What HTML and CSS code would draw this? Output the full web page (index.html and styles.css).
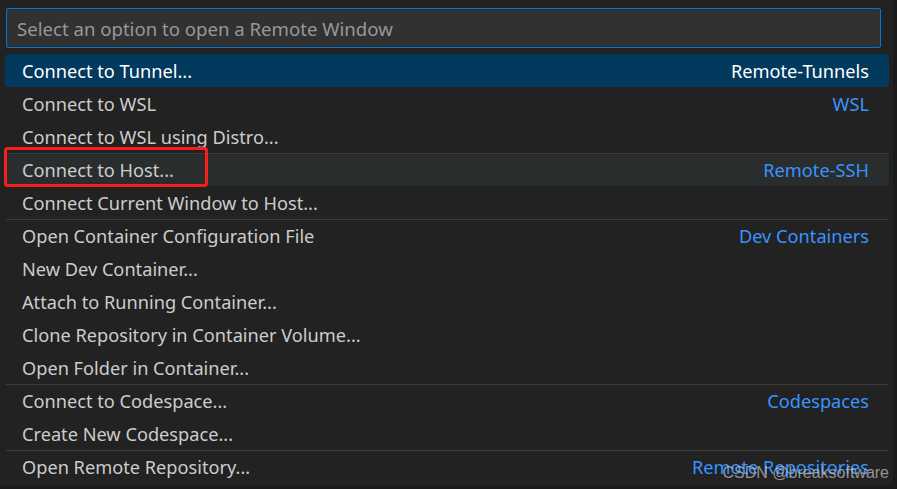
FILE: index.html
```html
<!DOCTYPE html>
<html lang="en">
<head>
    <meta charset="UTF-8">
    <title>Remote Window</title>
    <link rel="stylesheet" href="styles.css">
</head>
<body>
    <div class="quick-pick">
        <div class="input-row">
            <input type="text" class="search" placeholder="Select an option to open a Remote Window">
        </div>
        <div class="list">
            <div class="item selected"><span class="label">Connect to Tunnel...</span><span class="desc">Remote-Tunnels</span></div>
            <div class="item"><span class="label">Connect to WSL</span><span class="desc">WSL</span></div>
            <div class="item"><span class="label">Connect to WSL using Distro...</span></div>
            <div class="item sep hover"><span class="label">Connect to Host...</span><span class="desc">Remote-SSH</span></div>
            <div class="item"><span class="label">Connect Current Window to Host...</span></div>
            <div class="item sep"><span class="label">Open Container Configuration File</span><span class="desc">Dev Containers</span></div>
            <div class="item"><span class="label">New Dev Container...</span></div>
            <div class="item"><span class="label">Attach to Running Container...</span></div>
            <div class="item"><span class="label">Clone Repository in Container Volume...</span></div>
            <div class="item"><span class="label">Open Folder in Container...</span></div>
            <div class="item sep"><span class="label">Connect to Codespace...</span><span class="desc">Codespaces</span></div>
            <div class="item"><span class="label">Create New Codespace...</span></div>
            <div class="item sep"><span class="label">Open Remote Repository...</span><span class="desc">Remote Repositories</span></div>
            <div class="highlight-box"></div>
        </div>
        <div class="watermark">CSDN @breaksoftware</div>
    </div>
</body>
</html>
```

FILE: styles.css
```css
body {
    margin: 0;
    background-color: #1b1b1b;
    font-family: "Noto Sans", "Open Sans", sans-serif;
}
.quick-pick {
    position: relative;
    width: 893px;
    height: 486px;
    background-color: #222222;
    border-radius: 0 0 6px 0;
    overflow: hidden;
}
.input-row {
    padding: 8px 16px 6px 6px;
}
.search {
    box-sizing: border-box;
    width: 875px;
    height: 40px;
    margin: 0;
    padding: 0 10px;
    border: 1px solid #0078d4;
    border-radius: 2px;
    background-color: #313131;
    color: #cccccc;
    font-family: inherit;
    font-size: 18.6px;
    outline: none;
}
.search::placeholder {
    color: #989898;
}
.list {
    position: relative;
    padding: 0 4px 0 5px;
}
.item {
    position: relative;
    display: flex;
    justify-content: space-between;
    align-items: center;
    height: 33px;
    padding: 0 20px 0 17px;
    border-radius: 4px;
    color: #cccccc;
    font-size: 18.2px;
    white-space: nowrap;
}
.item.sep::before {
    content: "";
    position: absolute;
    top: 0;
    left: 1px;
    right: 1px;
    border-top: 1px solid #3c3c3c;
}
.item.selected {
    background-color: #04395e;
    color: #ffffff;
}
.item.selected .desc {
    color: #ffffff;
}
.item.hover {
    background-color: #2a2d2e;
}
.desc {
    color: #3794ff;
}
.highlight-box {
    position: absolute;
    left: 4px;
    top: 93px;
    width: 198px;
    height: 34px;
    border: 3px solid #f81e1e;
    border-radius: 4px;
}
.watermark {
    position: absolute;
    right: 4px;
    bottom: 4px;
    color: rgba(200, 200, 200, 0.7);
    font-family: "Liberation Sans", Arial, sans-serif;
    font-size: 16px;
}
```
